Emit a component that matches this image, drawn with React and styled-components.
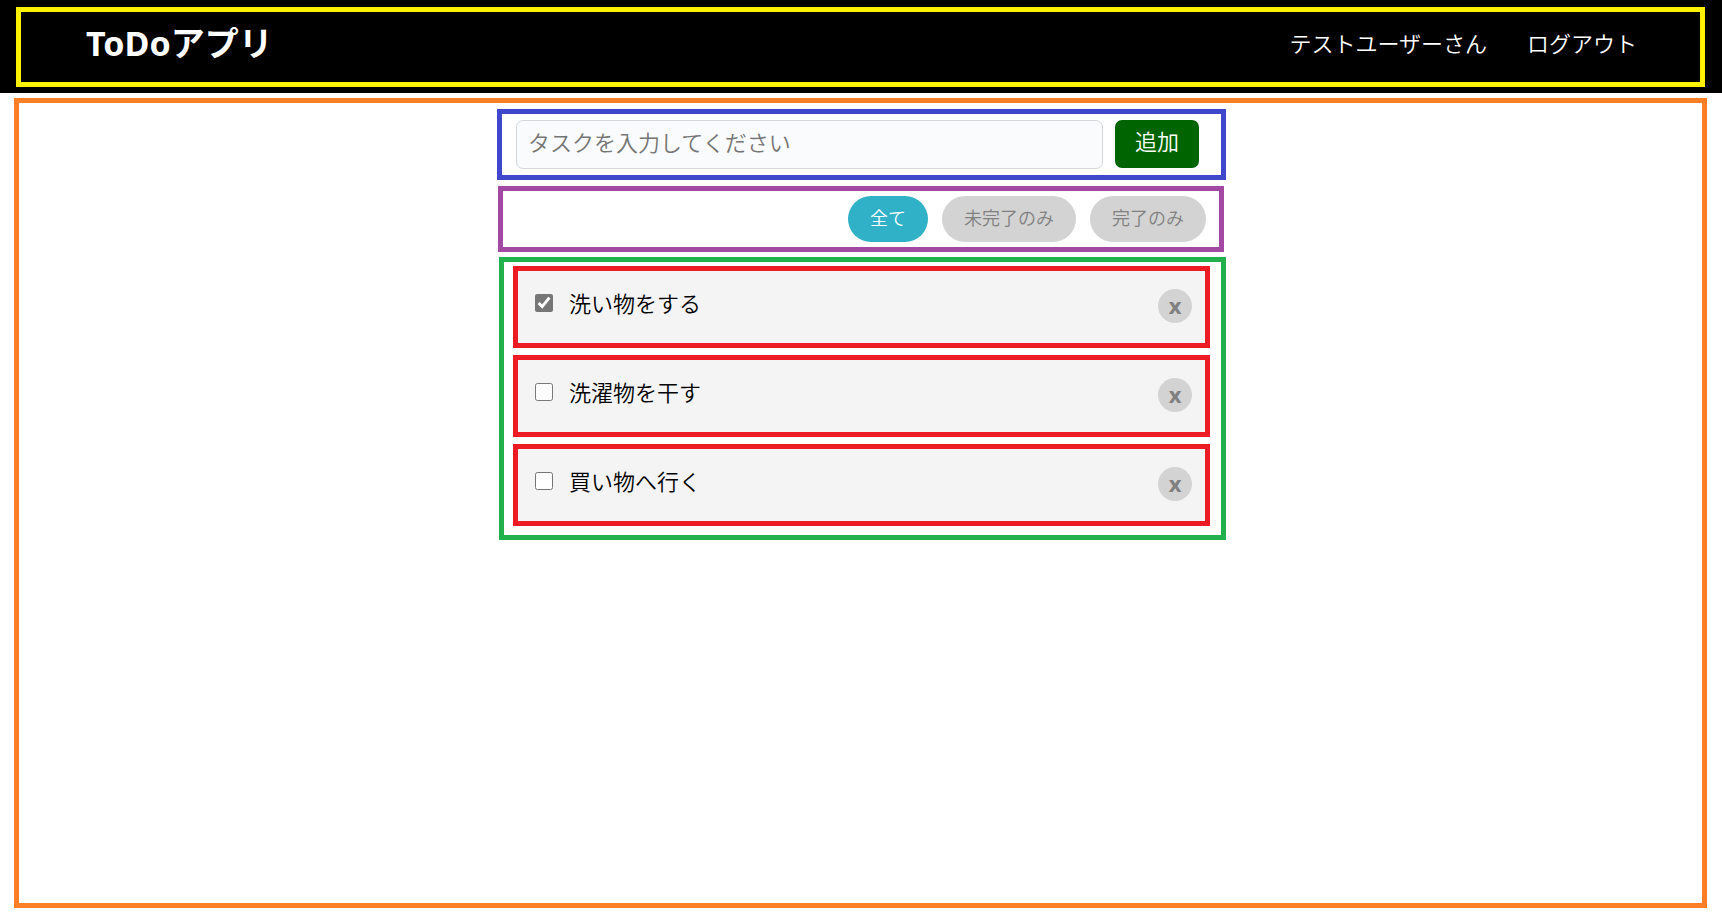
import React, { useState } from "react";
import styled, { createGlobalStyle } from "styled-components";

const GlobalStyle = createGlobalStyle`
  *, *::before, *::after { box-sizing: border-box; }
  body {
    margin: 0;
    background: #fff;
    color: #000;
    font-family: "Noto Sans", "Noto Sans CJK JP", sans-serif;
    font-size: 22px;
    font-weight: 350;
    line-height: 28px;
  }
  button, input { font: inherit; }
`;

const Header = styled.header`
  background: #000;
  color: #fff;
  padding: 7px 17px 6px 16px;
`;

const HeaderInner = styled.div`
  display: flex;
  align-items: center;
  justify-content: space-between;
  min-height: 80px;
  padding: 0 63px 8px 65px;
  border: 5px solid #fff200;
`;

const Title = styled.h1`
  margin: 0;
  font-size: 34px;
  line-height: 40px;
  font-weight: 700;
`;

const Nav = styled.nav`
  display: flex;
  gap: 40px;
`;

const LogoutLink = styled.a`
  color: inherit;
  text-decoration: none;
`;

const Main = styled.main`
  margin: 5px 15px 15px 14px;
  padding: 6px 0 6px 2px;
  min-height: calc(100vh - 113px);
  border: 5px solid #ff7f27;
`;

const Content = styled.div`
  max-width: 729px;
  margin: 0 auto;
`;

const Panel = styled.section`
  border: 5px solid ${(p) => p.$color};
`;

const TaskForm = styled(Panel).attrs({ as: "form" })`
  display: flex;
  gap: 12px;
  padding: 6px 22px 6px 14px;
`;

const TaskInput = styled.input`
  flex: 1;
  min-width: 0;
  height: 49px;
  padding: 0 11px 6px;
  border: 1px solid #d3d7da;
  border-radius: 7px;
  background: #fafbfd;
  outline: none;
  &::placeholder { color: #757575; opacity: 1; }
`;

const AddButton = styled.button`
  width: 84px;
  height: 48px;
  padding: 0 0 6px;
  border: 0;
  border-radius: 7px;
  background: #006400;
  color: #fff;
  cursor: pointer;
`;

const FilterBar = styled(Panel)`
  display: flex;
  justify-content: flex-end;
  gap: 14px;
  margin: 6px 2px 5px 1px;
  padding: 5px 13px 5px 0;
`;

const FilterButton = styled.button`
  height: 46px;
  padding: 0 22px 3px;
  border: 0;
  border-radius: 23px;
  font-size: 18px;
  background: ${(p) => (p.$active ? "#30b1c7" : "#d3d3d3")};
  color: ${(p) => (p.$active ? "#fff" : "#808080")};
  cursor: pointer;
`;

const TaskPanel = styled(Panel)`
  margin-left: 2px;
  padding: 4px 11px 9px 9px;
`;

const TaskList = styled.ul`
  display: grid;
  gap: 7px;
  margin: 0;
  padding: 0;
  list-style: none;
`;

const TaskItem = styled.li`
  display: flex;
  align-items: flex-start;
  justify-content: space-between;
  min-height: 82px;
  padding: 18px 13px 0 17px;
  border: 5px solid #ed1c24;
  background: #f4f4f4;
`;

const TaskLabel = styled.label`
  display: flex;
  align-items: center;
  gap: 16px;
`;

const Checkbox = styled.input`
  width: 18px;
  height: 18px;
  margin: 0;
  accent-color: #767676;
`;

const DeleteButton = styled.button`
  width: 34px;
  height: 34px;
  padding: 0 0 2px;
  border: 0;
  border-radius: 50%;
  background: #d3d3d3;
  color: #808080;
  font-size: 22px;
  font-weight: 700;
  cursor: pointer;
`;

const FILTERS = [
  { key: "all", label: "全て" },
  { key: "open", label: "未完了のみ" },
  { key: "done", label: "完了のみ" },
];

const INITIAL_TASKS = [
  { id: 1, text: "洗い物をする", done: true },
  { id: 2, text: "洗濯物を干す", done: false },
  { id: 3, text: "買い物へ行く", done: false },
];

export default function App() {
  const [tasks, setTasks] = useState(INITIAL_TASKS);
  const [filter, setFilter] = useState("all");
  const [draft, setDraft] = useState("");

  const addTask = (event) => {
    event.preventDefault();
    const text = draft.trim();
    if (!text) return;
    setTasks([...tasks, { id: Date.now(), text, done: false }]);
    setDraft("");
  };

  const toggleTask = (id) =>
    setTasks(tasks.map((t) => (t.id === id ? { ...t, done: !t.done } : t)));

  const visible = tasks.filter(
    (t) => filter === "all" || (filter === "done") === t.done
  );

  return (
    <>
      <GlobalStyle />
      <Header>
        <HeaderInner>
          <Title lang="ja">ToDoアプリ</Title>
          <Nav lang="ja">
            <span>テストユーザーさん</span>
            <LogoutLink href="#logout">ログアウト</LogoutLink>
          </Nav>
        </HeaderInner>
      </Header>
      <Main lang="ja">
        <Content>
          <TaskForm $color="#3f48cc" onSubmit={addTask}>
            <TaskInput
              type="text"
              aria-label="タスク"
              placeholder="タスクを入力してください"
              value={draft}
              onChange={(e) => setDraft(e.target.value)}
            />
            <AddButton type="submit">追加</AddButton>
          </TaskForm>
          <FilterBar $color="#a349a4">
            {FILTERS.map((f) => (
              <FilterButton
                key={f.key}
                type="button"
                $active={filter === f.key}
                aria-pressed={filter === f.key}
                onClick={() => setFilter(f.key)}
              >
                {f.label}
              </FilterButton>
            ))}
          </FilterBar>
          <TaskPanel $color="#22b14c">
            <TaskList>
              {visible.map((t) => (
                <TaskItem key={t.id}>
                  <TaskLabel>
                    <Checkbox
                      type="checkbox"
                      checked={t.done}
                      onChange={() => toggleTask(t.id)}
                    />
                    {t.text}
                  </TaskLabel>
                  <DeleteButton
                    type="button"
                    onClick={() => setTasks(tasks.filter((o) => o.id !== t.id))}
                  >
                    x
                  </DeleteButton>
                </TaskItem>
              ))}
            </TaskList>
          </TaskPanel>
        </Content>
      </Main>
    </>
  );
}
